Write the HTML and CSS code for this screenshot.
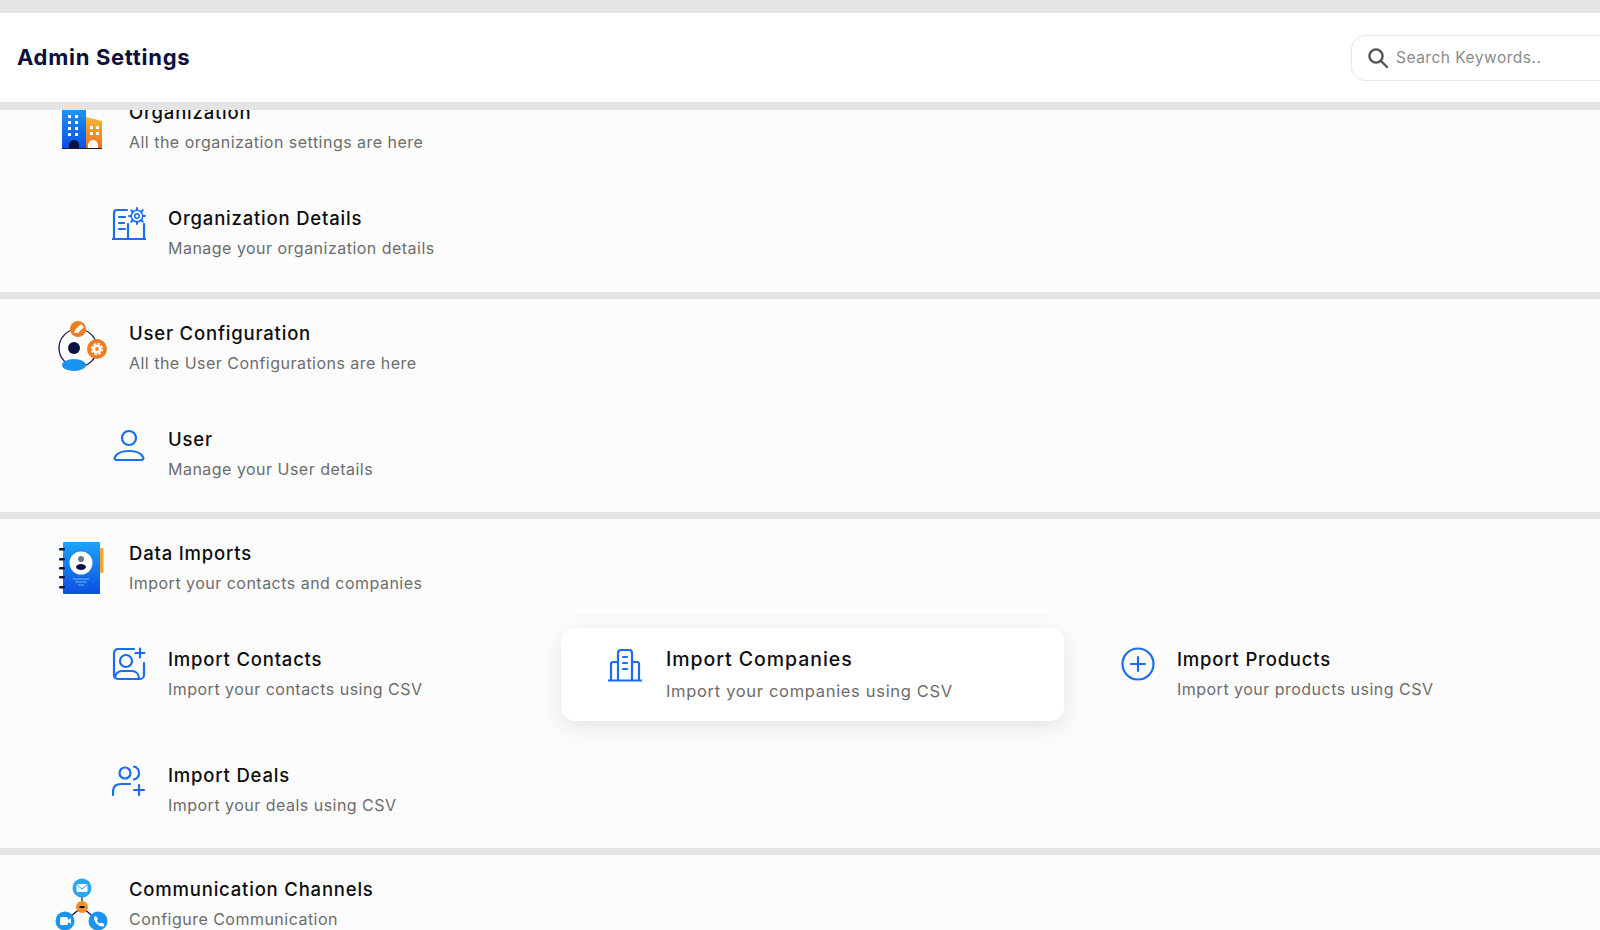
FILE: index.html
```html
<!DOCTYPE html>
<html>
<head>
	<title>Admin Settings</title>
	<meta charset="utf-8">
	<link rel="stylesheet" href="styles.css">
</head>
<body>
	<div class="page">
		<div class="topbar"></div>
		<header class="header">
			<h1>Admin Settings</h1>
			<label class="search">
				<svg width="22" height="22" viewBox="0 0 22 22" fill="none" stroke="#555" stroke-width="2.4" stroke-linecap="round"><circle cx="9" cy="9" r="6.6"/><path d="M14 14l6 6"/></svg>
				<input type="text" placeholder="Search Keywords..">
			</label>
		</header>

		<div class="list">
			<div class="sections">

				<!-- organization -->
				<section class="section">
					<div class="section-head">
						<svg class="big-icon" viewBox="0 0 52 52">
							<defs>
								<linearGradient id="blueFade" x1="0" y1="0" x2="0" y2="1"><stop offset="0" stop-color="#1fa2f8"/><stop offset="1" stop-color="#0a4fe2"/></linearGradient>
								<linearGradient id="orangeFade" x1="0" y1="0" x2="0" y2="1"><stop offset="0" stop-color="#f6b636"/><stop offset="1" stop-color="#f06f1e"/></linearGradient>
							</defs>
							<rect x="6" y="2" width="24" height="47" fill="url(#blueFade)"/>
							<path d="M30 17l16 4v28H30z" fill="url(#orangeFade)"/>
							<g fill="#fff">
								<rect x="12" y="15" width="3" height="3"/><rect x="19" y="15" width="3" height="3"/>
								<rect x="12" y="21" width="3" height="3"/><rect x="19" y="21" width="3" height="3"/>
								<rect x="12" y="27" width="3" height="3"/><rect x="19" y="27" width="3" height="3"/>
								<rect x="12" y="33" width="3" height="3"/><rect x="19" y="33" width="3" height="3"/>
								<rect x="34" y="26" width="3" height="3"/><rect x="40" y="26" width="3" height="3"/>
								<rect x="34" y="32" width="3" height="3"/><rect x="40" y="32" width="3" height="3"/>
								<path d="M32 49v-4a5 5 0 0 1 10 0v4z"/>
							</g>
							<path d="M13 49v-4a5 5 0 0 1 10 0v4z" fill="#0b1140"/>
							<rect x="6" y="48" width="40" height="1" fill="#1a1a2e"/>
						</svg>
						<div class="text">
							<h2>Organization</h2>
							<p>All the organization settings are here</p>
						</div>
					</div>
					<div class="items">
						<a class="item">
							<svg class="icon" viewBox="0 0 34 34">
								<path d="M16 32V18M15 4H5a3 3 0 0 0-3 3v25M.500 33h33M32 18v15M7 11h6M7 17h5M7 23h6"/>
								<g stroke-width="1.500">
									<circle cx="25" cy="10" r="2.300"/>
									<circle cx="25" cy="10" r="5.800"/>
									<path d="M25 2v2.200M25 15.800V18M17 10h2.200M30.800 10H33M19.300 4.300l1.600 1.600M29.100 14.100l1.600 1.600M19.300 15.700l1.600-1.600M29.100 5.900l1.600-1.600" stroke-width="2"/>
								</g>
							</svg>
							<div class="text">
								<h3>Organization Details</h3>
								<p>Manage your organization details</p>
							</div>
						</a>
					</div>
				</section>

				<!-- users -->
				<section class="section">
					<div class="section-head">
						<svg class="big-icon" viewBox="0 0 52 52">
							<circle cx="22" cy="27" r="19" fill="none" stroke="#0b1140" stroke-width="1.200"/>
							<circle cx="18" cy="27" r="6" fill="#0b1140"/>
							<ellipse cx="18" cy="44" rx="12" ry="6" fill="#1c93f0"/>
							<circle cx="22" cy="8" r="8" fill="#ef7d22"/>
							<path d="M18 12l1-3 6-6 3 3-6 6z" fill="#fff"/>
							<circle cx="41" cy="28" r="10" fill="#ef7d22"/>
							<circle cx="41" cy="28" r="4.600" fill="#fff"/>
							<circle cx="41" cy="28" r="5.400" fill="none" stroke="#fff" stroke-width="1.600" stroke-dasharray="2.500 1.700"/>
							<circle cx="41" cy="28" r="1.900" fill="#ef7d22"/>
						</svg>
						<div class="text">
							<h2>User Configuration</h2>
							<p>All the User Configurations are here</p>
						</div>
					</div>
					<div class="items">
						<a class="item">
							<svg class="icon" viewBox="0 0 34 34">
								<circle cx="17" cy="11" r="7"/>
								<path d="M5 33h24c2 0 3-1.500 2-3-2-4-8-6-14-6s-12 2-14 6c-1 1.500 0 3 2 3z"/>
							</svg>
							<div class="text">
								<h3>User</h3>
								<p>Manage your User details</p>
							</div>
						</a>
					</div>
				</section>

				<!-- imports -->
				<section class="section">
					<div class="section-head">
						<svg class="big-icon" viewBox="0 0 52 52">
							<rect x="44" y="7" width="3.500" height="25" rx="1" fill="#f0a72c"/>
							<rect x="7" y="1" width="37" height="52" rx="1" fill="url(#blueFade)"/>
							<g fill="#0b1140">
								<rect x="3" y="7" width="6" height="2.600" rx="1.300"/><rect x="3" y="17" width="6" height="2.600" rx="1.300"/>
								<rect x="3" y="26" width="6" height="2.600" rx="1.300"/><rect x="3" y="35" width="6" height="2.600" rx="1.300"/>
								<rect x="3" y="45" width="6" height="2.600" rx="1.300"/>
							</g>
							<circle cx="25" cy="22" r="11.500" fill="#fff"/>
							<circle cx="25" cy="18" r="3" fill="#6a7488"/>
							<ellipse cx="25" cy="26" rx="5" ry="3" fill="#0b1140"/>
							<path d="M17 38h16M19 41h12M22 44h6" stroke="#8fc8fb" stroke-width=".8"/>
						</svg>
						<div class="text">
							<h2>Data Imports</h2>
							<p>Import your contacts and companies</p>
						</div>
					</div>
					<div class="items">
						<a class="item">
							<svg class="icon" viewBox="0 0 34 34">
								<path d="M22 2H6a4 4 0 0 0-4 4v22a4 4 0 0 0 4 4h22a4 4 0 0 0 4-4V16"/>
								<circle cx="14" cy="14" r="6"/>
								<path d="M3 31c0-4 3-7 7-7h10c4 0 7 3 7 8M28 1.500v9M23.500 6h9"/>
							</svg>
							<div class="text">
								<h3>Import Contacts</h3>
								<p>Import your contacts using CSV</p>
							</div>
						</a>
						<a class="item active">
							<svg class="icon" viewBox="0 0 34 34">
								<path d="M10 32V5a3 3 0 0 1 3-3h8a3 3 0 0 1 3 3v27M10 14H5a2 2 0 0 0-2 2v16M24 14h5a2 2 0 0 1 2 2v16M.500 32.500h33M15 9h4M15 15h4M15 21h4"/>
							</svg>
							<div class="text">
								<h3>Import Companies</h3>
								<p>Import your companies using CSV</p>
							</div>
						</a>
						<a class="item">
							<svg class="icon" viewBox="0 0 34 34">
								<circle cx="17" cy="17" r="15.500"/>
								<path d="M17 10v14M10 17h14"/>
							</svg>
							<div class="text">
								<h3>Import Products</h3>
								<p>Import your products using CSV</p>
							</div>
						</a>
						<a class="item">
							<svg class="icon" viewBox="0 0 34 34">
								<circle cx="13" cy="10" r="5.500"/>
								<path d="M22 3.500c3.500 1 5 3.500 5 6.500s-1.500 5.500-5 6.500M1 32v-3c0-5 3-8 8-8h9M27 22v10M22 27h10"/>
							</svg>
							<div class="text">
								<h3>Import Deals</h3>
								<p>Import your deals using CSV</p>
							</div>
						</a>
					</div>
				</section>

				<!-- channels -->
				<section class="section">
					<div class="section-head">
						<svg class="big-icon" viewBox="0 0 52 52">
							<path d="M26 11v19M26 30L9 44M26 30l16 14" stroke="#0b1140" stroke-width="1.200"/>
							<circle cx="26" cy="11" r="9.500" fill="#2aa5f0"/>
							<rect x="20.500" y="7" width="11" height="8" rx="1.500" fill="#fff"/>
							<path d="M21 8l5 4 5-4" fill="none" stroke="#2aa5f0"/>
							<circle cx="26" cy="30" r="6" fill="#ef8f2a"/>
							<rect x="23.500" y="29" width="5" height="2" fill="#0b1140"/>
							<circle cx="9" cy="44" r="9.500" fill="#1c93f0"/>
							<rect x="4" y="40" width="8" height="8" rx="1.500" fill="#fff"/>
							<path d="M12 43l3-2v6l-3-2z" fill="#fff"/>
							<circle cx="42" cy="44" r="9.500" fill="#1c93f0"/>
							<path d="M38 40l2-1 2 3-1 1.500c.5 1.500 1.500 2.500 3 3l1.500-1 3 2-1 2c-5 .5-10-4.500-9.500-9.500z" fill="#fff"/>
						</svg>
						<div class="text">
							<h2>Communication Channels</h2>
							<p>Configure Communication</p>
						</div>
					</div>
				</section>

			</div>
		</div>
	</div>
</body>
</html>
```

FILE: styles.css
```css
*, *:before, *:after { box-sizing: border-box; }

html, body { margin: 0; height: 100%; }

body { font-family: "Inter", "Open Sans", sans-serif; background-color: #e4e4e4; color: #0e0e0e; }

.page { height: 930px; display: flex; flex-direction: column; overflow: hidden; }

.topbar { height: 13px; flex-shrink: 0; background-color: #e4e4e4; }

.header {
	height: 97px; flex-shrink: 0; padding-left: 17px; background-color: #fff;
	border-bottom: 8px solid #e4e4e4;
	display: flex; align-items: center; justify-content: space-between; overflow: hidden;
}

h1 { margin: 0 0 2px 0; font-size: 22px; font-weight: 700; letter-spacing: .7px; color: #0d0e3e; }

.search {
	width: 300px; height: 46px; flex-shrink: 0; margin-right: -51px; padding-left: 15px;
	border: 1px solid #e7e7e7; border-radius: 14px; background-color: #fff;
	display: flex; align-items: center; gap: 7px;
}
.search input { flex: 1; min-width: 0; border: 0; outline: 0; padding: 0; font: inherit; font-size: 15.5px; letter-spacing: .5px; background: none; }
.search input::placeholder { color: #8b8b8b; opacity: 1; }

.list { flex: 1; min-height: 0; overflow: hidden; }

/* list is scrolled a bit, first section sits under the header */
.sections { margin-top: -32px; }

.section { margin-bottom: 7px; background-color: #fcfcfc; }

.section-head {
	height: 97px; padding: 22px 0 0 56px;
	border-bottom: 1px solid #f8f8f8;
	display: flex; align-items: flex-start; gap: 21px;
}

.big-icon { width: 52px; height: 52px; flex-shrink: 0; overflow: visible; }

h2, h3 { margin: 0; font-size: 18.5px; line-height: 24px; font-weight: 500; letter-spacing: .8px; }

.text p { margin: 6px 0 0 0; font-size: 16px; line-height: 24px; letter-spacing: .48px; color: #6c6c6c; }

.items {
	padding: 0 0 1px 66px;
	display: grid; grid-template-columns: repeat(3, 483px); grid-auto-rows: 115.5px; column-gap: 21.5px;
}

.item { padding: 31px 0 0 46px; display: flex; align-items: flex-start; gap: 22px; }

.icon { width: 34px; height: 34px; flex-shrink: 0; fill: none; stroke: #1a6cf0; stroke-width: 2.2; stroke-linecap: round; stroke-linejoin: round; }

.item .text p { margin-top: 6px; }

.item.active {
	height: 93px; margin: 12px -10.5px 0 -9.5px; padding: 20px 0 0 47px; gap: 24px;
	background-color: #fff; border-radius: 14px;
	box-shadow: 0 6px 22px rgba(0,0,0,.1);
}
.item.active h3 { font-size: 19.5px; line-height: 22px; letter-spacing: .95px; }
.item.active .text p { margin-top: 9px; font-size: 16.5px; letter-spacing: .68px; }
```
